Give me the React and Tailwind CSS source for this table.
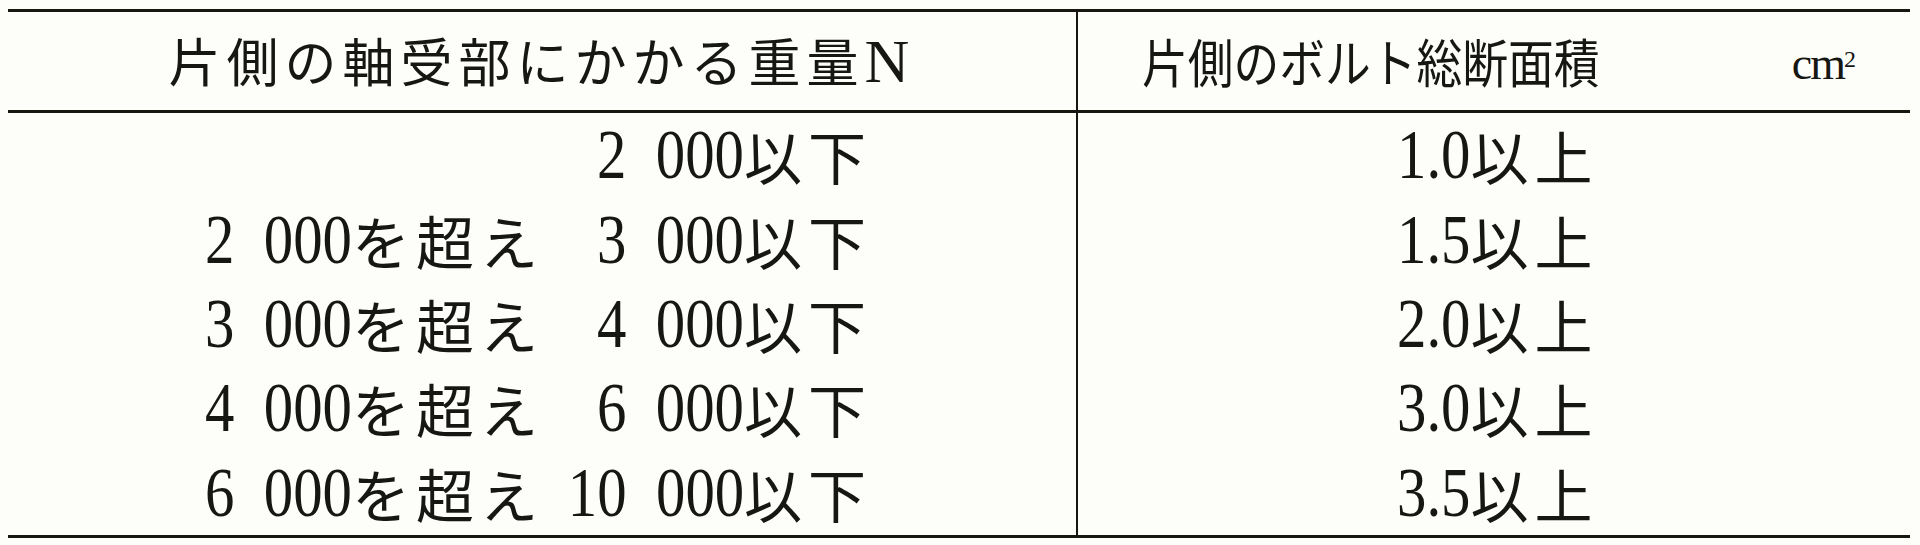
import React from "react";

const widths = {
  group: "w-[147px]",
  group10: "w-[176px]",
  dec: "w-[73px]",
};

const D = ({ children, w }) => (
  <span className={`inline-flex justify-center overflow-visible ${w}`}>
    <span className="inline-block shrink-0 scale-x-[0.84] font-['Liberation_Serif',serif] text-[70px] leading-none whitespace-pre">
      {children}
    </span>
  </span>
);
const J = ({ children }) => (
  <span className="font-['Noto_Sans_CJK_JP',sans-serif] text-[58px] leading-none tracking-[6px]">{children}</span>
);

const rows = [
  { from: null, to: "2\u2002000", toW: widths.group, area: "1.0" },
  { from: "2\u2002000", to: "3\u2002000", toW: widths.group, area: "1.5" },
  { from: "3\u2002000", to: "4\u2002000", toW: widths.group, area: "2.0" },
  { from: "4\u2002000", to: "6\u2002000", toW: widths.group, area: "3.0" },
  { from: "6\u2002000", to: "10\u2002000", toW: widths.group10, area: "3.5" },
];

export default function App() {
  return (
    <div className="w-[1920px] h-[545px] bg-[#fdfdfa] pt-[9px] pl-[8px] text-[#161612] overflow-hidden">
      <div className="w-[1902px] border-t-[3px] border-b-[3px] border-[#17170f]">
        <div className="flex h-[101px] border-b-[3px] border-[#17170f]">
          <div className="w-[1070px] border-r-2 border-[#17170f] flex items-center justify-center">
            <div className="flex items-baseline tracking-[6px]">
              <span className="font-['Noto_Sans_CJK_JP',sans-serif] text-[52px] leading-none">片側の軸受部にかかる重量</span>
              <span className="font-['Liberation_Serif',serif] text-[62px] leading-none">N</span>
            </div>
          </div>
          <div className="flex-1 flex items-center justify-between pl-[64px] pr-[56px]">
            <span className="inline-block origin-left scale-x-[0.88] font-['Noto_Sans_CJK_JP',sans-serif] text-[52px] leading-none whitespace-nowrap">
              片側のボルト総断面積
            </span>
            <span className="font-['Liberation_Serif',serif] text-[46px] leading-none tracking-[-2px] pt-[6px]">
              cm<sup className="text-[24px]">2</sup>
            </span>
          </div>
        </div>
        <div className="flex h-[422px]">
          <div className="w-[1070px] border-r-2 border-[#17170f] grid grid-rows-5">
            {rows.map((r, i) => (
              <div key={i} className="flex items-center">
                <div className="flex items-center">
                  <span className="w-[536px] flex items-center justify-end">
                    {r.from && (
                      <>
                        <D w={widths.group}>{r.from}</D>
                        <J>を超え</J>
                      </>
                    )}
                  </span>
                  <span className="w-[328px] flex items-center justify-end">
                    <D w={r.toW}>{r.to}</D>
                    <J>以下</J>
                  </span>
                </div>
              </div>
            ))}
          </div>
          <div className="flex-1 grid grid-rows-5">
            {rows.map((r, i) => (
              <div key={i} className="flex items-center justify-center pl-[8px]">
                <div className="flex items-center">
                  <D w={widths.dec}>{r.area}</D>
                  <J>以上</J>
                </div>
              </div>
            ))}
          </div>
        </div>
      </div>
    </div>
  );
}
